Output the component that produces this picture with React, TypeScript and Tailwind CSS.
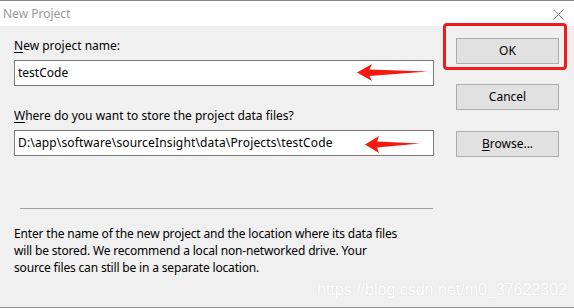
import React from "react";

const font = { fontFamily: '"Noto Sans", "Segoe UI", sans-serif' };

function Btn({ children }: { children: React.ReactNode }) {
  return (
    <div className="w-[103px] h-[26px] border border-[#adadad] bg-[#e1e1e1] flex items-center justify-center text-[12px] text-black">
      {children}
    </div>
  );
}

export default function App() {
  return (
    <div
      className="relative w-[574px] h-[308px] bg-[#f0f0f0] border-t border-b border-[#8a8a8a] flex flex-col overflow-hidden"
      style={font}
    >
      <div className="h-[25px] bg-white flex items-center justify-between pl-[3px] pr-[10px] shrink-0">
        <span className="text-[12px] text-[#9a9a9a] leading-none">New Project</span>
        <svg width="11" height="11" viewBox="0 0 11 11" className="mt-[1px]">
          <path d="M0.5 0.5 L10.5 10.5 M10.5 0.5 L0.5 10.5" stroke="#808080" strokeWidth="1" fill="none" />
        </svg>
      </div>
      <div className="flex flex-1">
        <div className="ml-[14px] w-[420px] flex flex-col text-[12px] text-black">
          <div className="mt-[12px] h-[16px] leading-[16px]">
            <span className="underline underline-offset-2">N</span>ew project name:
          </div>
          <div className="mt-[6px] h-[26px] border border-[#7a7a7a] bg-white flex items-center pl-[3px]">
            testCode
          </div>
          <div className="mt-[22px] h-[16px] leading-[16px]">
            <span className="underline underline-offset-2">W</span>here do you want to store the project data files?
          </div>
          <div className="mt-[6px] h-[26px] border border-[#7a7a7a] bg-white flex items-center pl-[3px] tracking-[0.15px]">
            D:\app\software\sourceInsight\data\Projects\testCode
          </div>
          <div className="mt-[52px] ml-[6px] w-[413px] h-px bg-[#a0a0a0] shrink-0" />
          <div className="mt-[16px] leading-[17px] tracking-[-0.17px]">
            Enter the name of the new project and the location where its data files
            <br />
            will be stored. We recommend a local non-networked drive. Your
            <br />
            source files can still be in a separate location.
          </div>
        </div>
        <div className="ml-[22px] flex flex-col">
          <div className="mt-[12px]">
            <Btn>OK</Btn>
          </div>
          <div className="mt-[20px]">
            <Btn>Cancel</Btn>
          </div>
          <div className="mt-[21px]">
            <Btn>
              <span className="underline underline-offset-2">B</span>rowse...
            </Btn>
          </div>
        </div>
      </div>

      <div className="absolute left-[443px] top-[22px] w-[124px] h-[47px] border-[3px] border-[#f01c1c] rounded-[4px]" />

      <svg className="absolute left-0 top-0" width="574" height="308" viewBox="0 0 574 308">
        <polygon points="357,71.5 372,63 369.5,68.5 428,70.5 369.5,75 372,80" fill="#f41a0f" />
        <polygon points="365,143.5 379,135 377,140.5 420,142.5 377,146.5 379,152" fill="#f41a0f" />
      </svg>

      <div
        className="absolute left-[317px] top-[279px] text-[16px] text-white leading-[20px]"
        style={{ fontFamily: '"Liberation Sans", Arial, sans-serif', textShadow: "0 0 1px rgba(0,0,0,0.14)" }}
      >
        https://blog.csdn.net/m0_37622302
      </div>
    </div>
  );
}
